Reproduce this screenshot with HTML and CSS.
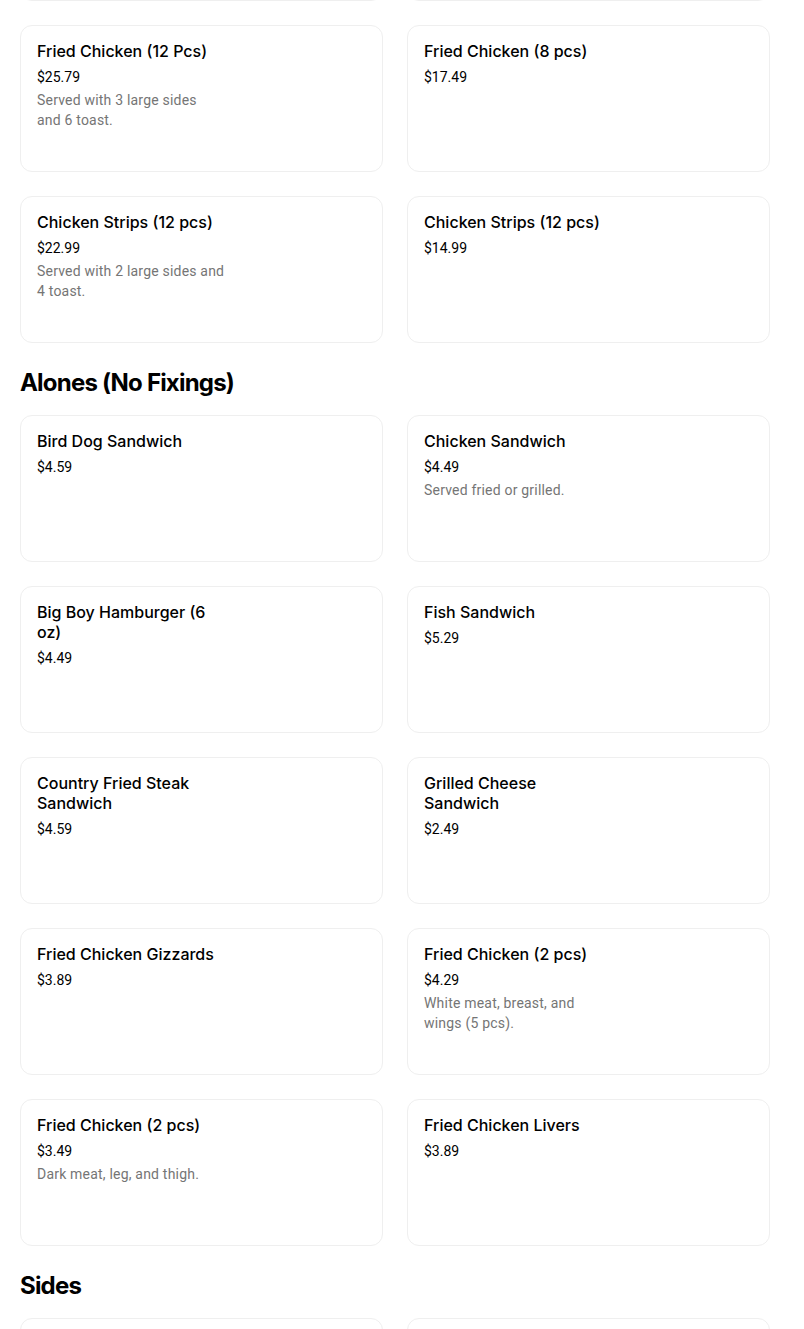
FILE: index.html
```html
<!DOCTYPE html>
<html lang="en">
<head>
<meta charset="utf-8">
<title>Menu</title>
<link rel="stylesheet" href="styles.css">
</head>
<body>
<main class="menu">
  <div class="grid grid-prev">
    <div class="card"><div class="info"><div class="title">Fried Chicken Family Meal</div><div class="price">$29.99</div></div></div>
    <div class="card"><div class="info"><div class="title">Fried Chicken (16 pcs)</div><div class="price">$31.99</div></div></div>
  </div>
  <div class="grid">
    <div class="card"><div class="info"><div class="title">Fried Chicken (12 Pcs)</div><div class="price">$25.79</div><div class="desc">Served with 3 large sides<br>and 6 toast.</div></div></div>
    <div class="card"><div class="info"><div class="title">Fried Chicken (8 pcs)</div><div class="price">$17.49</div></div></div>
    <div class="card"><div class="info"><div class="title">Chicken Strips (12 pcs)</div><div class="price">$22.99</div><div class="desc">Served with 2 large sides and 4 toast.</div></div></div>
    <div class="card"><div class="info"><div class="title">Chicken Strips (12 pcs)</div><div class="price">$14.99</div></div></div>
  </div>

  <h2 class="section-title">Alones (No Fixings)</h2>
  <div class="grid">
    <div class="card"><div class="info"><div class="title">Bird Dog Sandwich</div><div class="price">$4.59</div></div></div>
    <div class="card"><div class="info"><div class="title">Chicken Sandwich</div><div class="price">$4.49</div><div class="desc">Served fried or grilled.</div></div></div>
    <div class="card"><div class="info"><div class="title">Big Boy Hamburger (6 oz)</div><div class="price">$4.49</div></div></div>
    <div class="card"><div class="info"><div class="title">Fish Sandwich</div><div class="price">$5.29</div></div></div>
    <div class="card"><div class="info"><div class="title">Country Fried Steak Sandwich</div><div class="price">$4.59</div></div></div>
    <div class="card"><div class="info"><div class="title">Grilled Cheese Sandwich</div><div class="price">$2.49</div></div></div>
    <div class="card"><div class="info"><div class="title">Fried Chicken Gizzards</div><div class="price">$3.89</div></div></div>
    <div class="card"><div class="info"><div class="title">Fried Chicken (2 pcs)</div><div class="price">$4.29</div><div class="desc">White meat, breast, and wings (5 pcs).</div></div></div>
    <div class="card"><div class="info"><div class="title">Fried Chicken (2 pcs)</div><div class="price">$3.49</div><div class="desc">Dark meat, leg, and thigh.</div></div></div>
    <div class="card"><div class="info"><div class="title">Fried Chicken Livers</div><div class="price">$3.89</div></div></div>
  </div>

  <h2 class="section-title">Sides</h2>
  <div class="grid">
    <div class="card"><div class="info"><div class="title">Mashed Potatoes</div><div class="price">$2.49</div></div></div>
    <div class="card"><div class="info"><div class="title">Coleslaw</div><div class="price">$2.49</div></div></div>
  </div>
</main>
</body>
</html>
```

FILE: styles.css
```css
html, body {
  margin: 0;
  padding: 0;
  background: #ffffff;
}

body {
  font-family: Inter, "Liberation Sans", sans-serif;
  color: #000000;
  overflow: hidden;
}

.menu {
  width: 750px;
  padding: 0 34px 0 20px;
}

.grid {
  display: grid;
  grid-template-columns: 1fr 1fr;
  gap: 24px;
}

.grid-prev {
  margin-top: -146px;
  margin-bottom: 24px;
}

.card {
  box-sizing: border-box;
  height: 147px;
  border: 1px solid #efefef;
  border-radius: 12px;
  padding: 15px 16px 16px 16px;
  background: #fff;
}

.info {
  width: 189px;
}

.title {
  font-size: 16px;
  font-weight: 500;
  line-height: 20px;
  color: #000;
}

.price {
  margin-top: 6px;
  font-family: Roboto, "Liberation Sans", sans-serif;
  font-size: 14px;
  line-height: 20px;
  color: #000;
}

.desc {
  margin-top: 3px;
  font-family: Roboto, "Liberation Sans", sans-serif;
  font-size: 14px;
  line-height: 20px;
  letter-spacing: 0.2px;
  color: #757575;
}

.section-title {
  margin: 24px 0 16px 0;
  font-size: 24px;
  line-height: 32px;
  font-weight: 700;
  letter-spacing: -0.8px;
}
```
